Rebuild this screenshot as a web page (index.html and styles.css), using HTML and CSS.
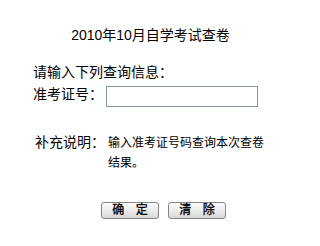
FILE: index.html
```html
<!DOCTYPE html>
<html lang="zh-CN">
<head>
<meta charset="utf-8">
<title>2010年10月自学考试查卷</title>
<link rel="stylesheet" href="styles.css">
</head>
<body>
<div class="page">
  <div class="title">2010年10月自学考试查卷</div>
  <form class="form" onsubmit="return false">
    <div class="prompt">请输入下列查询信息：</div>
    <div class="row">
      <label class="label" for="zkz">准考证号：</label>
      <input class="field" id="zkz" type="text">
    </div>
    <div class="note">
      <div class="note-label">补充说明：</div>
      <div class="note-text">输入准考证号码查询本次查卷结果。</div>
    </div>
    <div class="actions">
      <button class="btn" type="submit">确 定</button>
      <button class="btn" type="reset">清 除</button>
    </div>
  </form>
</div>
</body>
</html>
```

FILE: styles.css
```css
html, body {
  margin: 0;
  padding: 0;
  background: #ffffff;
}
body {
  font-family: "Liberation Sans", "Noto Sans CJK SC", sans-serif;
  color: #000000;
  width: 301px;
  height: 246px;
  overflow: hidden;
}
.page {
  padding-top: 25px;
}
.title {
  font-size: 14px;
  line-height: 20px;
  text-align: center;
}
.form {
  margin: 17px 0 0 33px;
}
.prompt {
  font-size: 14px;
  line-height: 20px;
}
.row {
  display: flex;
  align-items: flex-start;
  margin-top: 2px;
}
.label {
  font-size: 14px;
  line-height: 20px;
  width: 73px;
  flex: none;
}
.field {
  margin: 2px 0 0 0;
  width: 152px;
  height: 21px;
  box-sizing: border-box;
  border: 1px solid #8397a7;
  padding: 0 2px;
  font-size: 12px;
  background: #ffffff;
  outline: none;
}
.note {
  display: flex;
  align-items: flex-start;
  margin-top: 26px;
  padding-left: 2px;
}
.note-label {
  font-size: 14px;
  line-height: 20px;
  width: 73px;
  flex: none;
  margin-top: -1px;
}
.note-text {
  font-size: 12px;
  line-height: 20px;
  width: 158px;
}
.actions {
  display: flex;
  gap: 9px;
  margin: 29px 0 0 68px;
}
.btn {
  width: 58px;
  height: 17px;
  box-sizing: border-box;
  padding: 0 0 0 4px;
  border: 1px solid #858585;
  border-radius: 3px;
  background: linear-gradient(#fbfbfb, #ececec 50%, #d6d6d6);
  font-family: "Liberation Sans", "Noto Sans CJK SC", sans-serif;
  font-size: 12px;
  font-weight: normal;
  letter-spacing: 4px;
  line-height: 15px;
  color: #000000;
  -webkit-text-stroke: 0.3px #000000;
}
```
